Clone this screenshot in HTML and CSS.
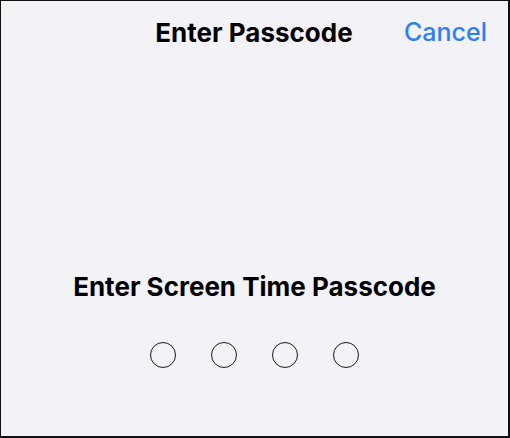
FILE: index.html
```html
<!DOCTYPE html>
<html lang="en">
<head>
  <meta charset="UTF-8">
  <title>Enter Passcode</title>
  <link rel="stylesheet" href="styles.css">
</head>
<body>

<div class="screen">
  <div class="navbar">
    <div class="nav-side"></div>
    <div class="nav-title">Enter Passcode</div>
    <div class="nav-side nav-right"><a class="cancel" href="#">Cancel</a></div>
  </div>

  <div class="content">
    <h1 class="prompt">Enter Screen Time Passcode</h1>
    <div class="dots">
      <span class="dot"></span>
      <span class="dot"></span>
      <span class="dot"></span>
      <span class="dot"></span>
    </div>
  </div>
</div>

</body>
</html>
```

FILE: styles.css
```css
html, body {
  margin: 0;
  padding: 0;
}
body {
  font-family: Inter, "Liberation Sans", Arial, sans-serif;
  background: #f2f2f7;
  color: #000;
}
.screen {
  box-sizing: border-box;
  width: 510px;
  height: 438px;
  border-style: solid;
  border-color: #111;
  border-width: 1px 2px 2px 1px;
  display: flex;
  flex-direction: column;
}
.navbar {
  display: flex;
  align-items: center;
  height: 62px;
  padding: 0 21px 0 20px;
}
.nav-side {
  flex: 1;
}
.nav-right {
  text-align: right;
}
.nav-title {
  font-size: 26px;
  font-weight: 700;
}
.cancel {
  color: #2d7ff0;
  font-size: 25px;
  font-weight: 500;
  text-decoration: none;
}
.content {
  display: flex;
  flex-direction: column;
  align-items: center;
  padding-top: 208px;
}
.prompt {
  margin: 0;
  font-size: 26px;
  font-weight: 700;
}
.dots {
  display: flex;
  gap: 35px;
  margin-top: 40px;
}
.dot {
  box-sizing: border-box;
  width: 26px;
  height: 26px;
  border: 1.6px solid #1a1a1a;
  border-radius: 50%;
}
```
